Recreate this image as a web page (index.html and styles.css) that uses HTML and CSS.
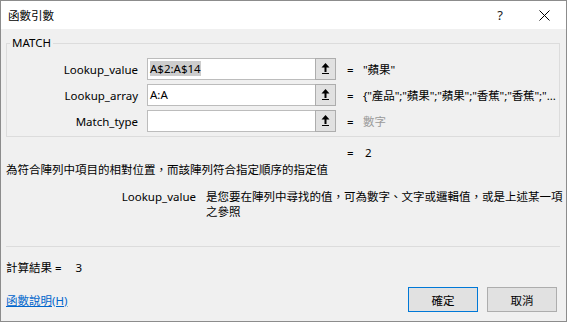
FILE: index.html
```html
<!DOCTYPE html>
<html lang="zh-Hant">
<head>
  <meta charset="UTF-8" />
  <title>函數引數</title>
  <link rel="stylesheet" href="styles.css">
</head>
<body>

  <div class="dialog">
    <div class="titlebar">
      <span class="title">函數引數</span>
      <span class="help">?</span>
      <span class="close">
        <svg width="11" height="11" viewBox="0 0 11 11"><path d="M0.5 0.5 L10.5 10.5 M10.5 0.5 L0.5 10.5" stroke="#000" stroke-width="1" fill="none"/></svg>
      </span>
    </div>

    <div class="content">
      <!-- Function arguments -->
      <fieldset class="group">
        <legend>MATCH</legend>
        <div class="args">
          <label>Lookup_value</label>
          <div class="ref-box">
            <span class="ref-input"><span class="sel">A$2:A$14</span></span>
            <span class="collapse"><svg width="9" height="12" viewBox="0 0 9 12"><path d="M4.5 0 L8.5 4.5 H5.5 V9 H3.5 V4.5 H0.5 Z" fill="#000"/><rect x="1" y="10" width="7" height="1" fill="#000"/></svg></span>
          </div>
          <span class="eq">=</span>
          <span class="val">"蘋果"</span>

          <label>Lookup_array</label>
          <div class="ref-box">
            <span class="ref-input">A:A</span>
            <span class="collapse"><svg width="9" height="12" viewBox="0 0 9 12"><path d="M4.5 0 L8.5 4.5 H5.5 V9 H3.5 V4.5 H0.5 Z" fill="#000"/><rect x="1" y="10" width="7" height="1" fill="#000"/></svg></span>
          </div>
          <span class="eq">=</span>
          <span class="val">{"產品";"蘋果";"蘋果";"香蕉";"香蕉";"...</span>

          <label>Match_type</label>
          <div class="ref-box">
            <span class="ref-input"></span>
            <span class="collapse"><svg width="9" height="12" viewBox="0 0 9 12"><path d="M4.5 0 L8.5 4.5 H5.5 V9 H3.5 V4.5 H0.5 Z" fill="#000"/><rect x="1" y="10" width="7" height="1" fill="#000"/></svg></span>
          </div>
          <span class="eq">=</span>
          <span class="val muted">數字</span>
        </div>
      </fieldset>

      <div class="formula-value"><span class="eq">=</span>2</div>
      <p class="summary">為符合陣列中項目的相對位置，而該陣列符合指定順序的指定值</p>

      <div class="arg-help">
        <span class="arg-name">Lookup_value</span>
        <span class="arg-text">是您要在陣列中尋找的值，可為數字、文字或邏輯值，或是上述某一項之參照</span>
      </div>

      <div class="divider"></div>

      <div class="calc-result">計算結果 =<span class="calc-num">3</span></div>

      <div class="footer">
        <a href="#" class="help-link">函數說明(H)</a>
        <div class="actions">
          <button type="button" class="btn default">確定</button>
          <button type="button" class="btn">取消</button>
        </div>
      </div>
    </div>
  </div>

</body>
</html>
```

FILE: styles.css
```css
body {
  margin: 0;
  font-family: "Noto Sans", "Noto Sans CJK TC", sans-serif;
  font-size: 11.5px;
  color: #000;
}
.dialog {
  width: 567px;
  height: 322px;
  box-sizing: border-box;
  border: 1px solid #8c8c8c;
  background-color: #f0f0f0;
  display: flex;
  flex-direction: column;
}
.titlebar {
  height: 28px;
  background-color: #fff;
  display: flex;
  align-items: center;
  padding-left: 7px;
}
.title {
  flex: 1;
}
.help {
  width: 44px;
  text-align: center;
  font-size: 13px;
  color: #222;
}
.close {
  width: 44px;
  display: flex;
  justify-content: center;
}
.content {
  flex: 1;
  padding: 0 6px 0 5px;
  display: flex;
  flex-direction: column;
}
.group {
  margin: 7px 0 0;
  padding: 0 2px 4px 0;
  border: 1px solid #dcdcdc;
  min-width: 0;
}
.group legend {
  margin-left: 3px;
  padding: 0 2px;
  line-height: 14px;
}
.args {
  display: grid;
  grid-template-columns: 140px 200px 16px 1fr;
  grid-auto-rows: 22px;
  row-gap: 4px;
  margin-top: 8px;
  align-items: center;
}
.args label {
  text-align: right;
  padding-right: 9px;
}
.ref-box {
  width: 189px;
  height: 22px;
  display: flex;
}
.ref-input {
  flex: 1;
  background-color: #fff;
  border: 1px solid #bcbcbc;
  border-right: none;
  padding-left: 2px;
  line-height: 20px;
}
.sel {
  background-color: #cdcdcd;
}
.collapse {
  width: 19px;
  background-color: #e1e1e1;
  border: 1px solid #adadad;
  display: flex;
  align-items: center;
  justify-content: center;
}
.val {
  white-space: nowrap;
  letter-spacing: -0.1px;
}
.muted {
  color: #9a9a9a;
}
.formula-value {
  margin-top: 8px;
  padding-left: 341px;
  line-height: 15px;
}
.formula-value .eq {
  display: inline-block;
  width: 18px;
}
.summary {
  margin: 2px 0 0;
  line-height: 15px;
}
.arg-help {
  display: grid;
  grid-template-columns: 190px 360px;
  column-gap: 10px;
  margin-top: 12px;
  line-height: 15px;
}
.arg-name {
  text-align: right;
}
.divider {
  margin-top: 27px;
  height: 1px;
  background-color: #dcdcdc;
}
.calc-result {
  margin-top: 13px;
  line-height: 15px;
}
.calc-num {
  margin-left: 14px;
}
.footer {
  margin-top: 12px;
  display: flex;
  align-items: center;
}
.help-link {
  color: #0066cc;
  text-decoration: underline;
}
.actions {
  margin-left: auto;
  margin-right: 3px;
  display: flex;
  gap: 9px;
}
.btn {
  width: 70px;
  height: 25px;
  background-color: #e1e1e1;
  border: 1px solid #adadad;
  font-family: inherit;
  font-size: 11.5px;
  color: #000;
  padding: 0;
}
.btn.default {
  border-color: #0078d7;
}
```
